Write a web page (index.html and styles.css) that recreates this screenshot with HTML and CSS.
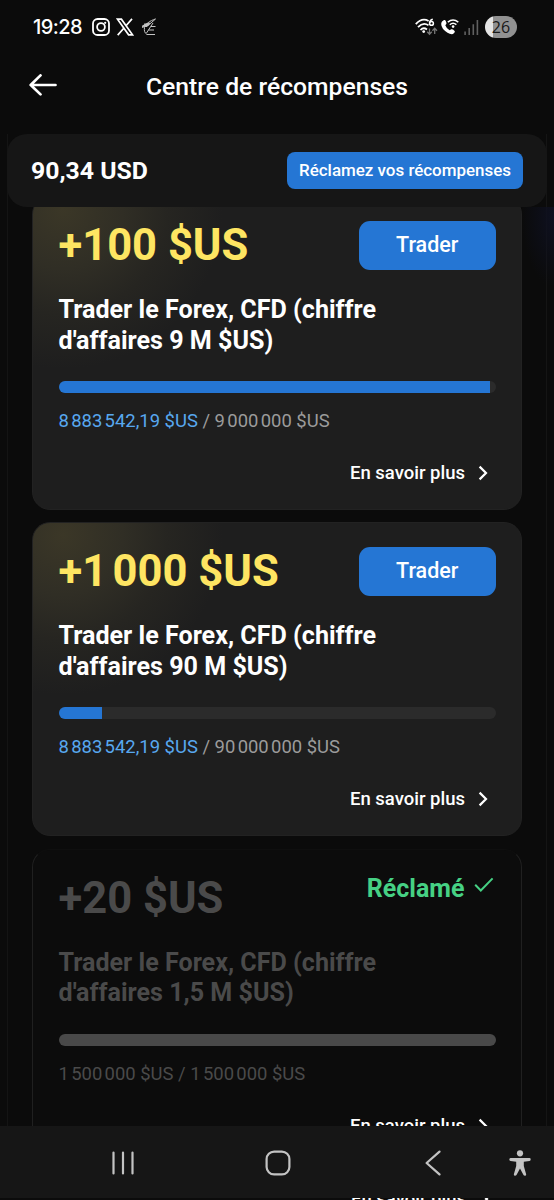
FILE: index.html
```
<!DOCTYPE html>
<html lang="fr">
<head>
<meta charset="utf-8">
<title>Centre de récompenses</title>
<link rel="stylesheet" href="styles.css">
</head>
<body>
<div class="phone">
  <div class="statusbar">
    <span class="clock">19:28</span>
    <svg class="ic-insta" viewBox="0 0 18 18" width="18" height="18" fill="none" stroke="#fff" stroke-width="1.800"><rect x="1" y="1" width="16" height="16" rx="4.600"/><circle cx="9" cy="9" r="3.900"/><circle cx="13.200" cy="4.800" r="1.100" fill="#fff" stroke="none"/></svg>
    <svg class="ic-x" viewBox="0 0 18 18" width="18" height="18" fill="none" stroke="#fff" stroke-width="1.700"><path d="M1.500 1.200H5.400L16.500 16.800H12.600Z"/><path d="M16 .9L10 7.800M7.800 10.200L1.700 17.100"/></svg>
    <svg class="ic-feather" viewBox="0 0 16 18" width="16" height="18" fill="none" stroke="#c4c4c4" stroke-width="1"><path d="M14.500 1C9 2.500 4 6.500 3.500 9.500S3.500 15 6 16.500H14M14.500 1L7 7.500 1 9.500M3 6L8 6.800M1 8.500L6 7.500M12 5L5.500 15M7.500 12H13M10 8.500H14.500"/><path d="M1.500 8L5.500 5.500 9 5.200 6 8.500Z" fill="#c4c4c4"/></svg>
    <span class="grow"></span>
    <svg class="ic-wifi" viewBox="0 0 23 18" width="23" height="18" fill="none" stroke="#fff" stroke-width="1.800"><path d="M.8 6.200Q7-.8 13.600 3M3 9.200Q8 3.800 13.500 7.300M5.500 12Q8.500 8.800 12 11.500"/><circle cx="8.700" cy="13.600" r="1.400" fill="#fff" stroke="none"/><path d="M17.800 1.200Q14.800 1.800 14.500 5.200" stroke-width="1.500"/><circle cx="16.500" cy="5.400" r="1.900" stroke-width="1.500"/><path d="M14.500 10.500V16M12.200 13.800L14.500 16.200 16.800 13.800M19.700 16V10.500M17.400 12.700L19.700 10.300 22 12.700" stroke="#777" stroke-width="1.300"/></svg>
    <svg class="ic-call" viewBox="0 0 18 16" width="18" height="16" fill="none" stroke="#fff"><path d="M1 2.600L3 1Q4 .6 4.500 1.500L5.500 4Q5.700 5 4.300 6.200Q5.300 9.200 8.600 11.200L10.200 10.300Q11 9.900 12 10.600L13.600 12Q14.200 12.700 13.500 13.400L12 15Q9.500 15.600 6.500 13.700Q.2 9.700.2 5Q.2 3.700 1 2.600Z" fill="#fff" stroke="none"/><path d="M6.800 3.200Q12-1 17.300 3.200M8.800 5.700Q12 3 15.400 5.700" stroke-width="1.500"/><circle cx="12.100" cy="7.600" r="1.300" fill="#fff" stroke="none"/></svg>
    <svg class="ic-signal" viewBox="0 0 15 15" width="15" height="15" stroke="#606060" stroke-width="1.600"><path d="M1.100 15V11.500M5.200 15V8M9.300 15V4.200M13.400 15V0"/></svg>
    <span class="battery">26</span>
  </div>

  <header class="header">
    <svg class="back" viewBox="0 0 28 22" width="28" height="22" fill="none" stroke="#fff" stroke-width="2.700" stroke-linecap="round" stroke-linejoin="round"><path d="M26.500 11H1.700M11.500 1.400L1.700 11 11.500 20.400"/></svg>
    <h1 class="heading"><span>Centre de récompenses</span></h1>
  </header>

  <main class="sheet">
    <section class="balance">
      <span class="balance-sum">90,34 USD</span>
      <button class="claim">Réclamez vos récompenses</button>
    </section>

    <div class="rewards">
      <article class="card">
        <div class="card-top"><span class="amount">+100 $US</span><button class="trade">Trader</button></div>
        <h2 class="title">Trader le Forex, CFD (chiffre<br>d'affaires 9 M $US)</h2>
        <div class="track"><div class="fill" style="width:98.700%"></div></div>
        <p class="progress"><b>8&#8201;883&#8201;542,19 $US</b> / 9&#8201;000&#8201;000 $US</p>
        <a class="more"><span>En savoir plus</span><svg viewBox="0 0 10 16" width="10" height="16"><path d="M1.600 1.600L8 8 1.600 14.400"/></svg></a>
      </article>

      <article class="card">
        <div class="card-top"><span class="amount">+1&#8201;000 $US</span><button class="trade">Trader</button></div>
        <h2 class="title">Trader le Forex, CFD (chiffre<br>d'affaires 90 M $US)</h2>
        <div class="track"><div class="fill" style="width:9.870%"></div></div>
        <p class="progress"><b>8&#8201;883&#8201;542,19 $US</b> / 90&#8201;000&#8201;000 $US</p>
        <a class="more"><span>En savoir plus</span><svg viewBox="0 0 10 16" width="10" height="16"><path d="M1.600 1.600L8 8 1.600 14.400"/></svg></a>
      </article>

      <article class="card claimed">
        <div class="card-top"><span class="amount">+20 $US</span><span class="status"><span>Réclamé</span><svg viewBox="0 0 20 16" width="20" height="16"><path d="M1.200 7.800L6.800 13.500 18.600 1.400"/></svg></span></div>
        <h2 class="title">Trader le Forex, CFD (chiffre<br>d'affaires 1,5 M $US)</h2>
        <div class="track"><div class="fill" style="width:100%"></div></div>
        <p class="progress">1&#8201;500&#8201;000 $US / 1&#8201;500&#8201;000 $US</p>
        <a class="more"><span>En savoir plus</span><svg viewBox="0 0 10 16" width="10" height="16"><path d="M1.600 1.600L8 8 1.600 14.400"/></svg></a>
      </article>
    </div>
  </main>

  <nav class="navbar">
    <svg class="nav-recent" viewBox="0 0 24 24" width="24" height="24" stroke="#c3c3c3" stroke-width="2.200" stroke-linecap="round"><path d="M2.500 1.500V22.500M12 1.500V22.500M21.500 1.500V22.500"/></svg>
    <svg class="nav-home" viewBox="0 0 26 26" width="26" height="26" fill="none" stroke="#c3c3c3" stroke-width="2.200"><rect x="1.600" y="1.600" width="22.800" height="22.800" rx="7.500"/></svg>
    <svg class="nav-back" viewBox="0 0 16 26" width="16" height="26" fill="none" stroke="#c3c3c3" stroke-width="2.200" stroke-linecap="round" stroke-linejoin="round"><path d="M14.500 1.600L1.600 13 14.500 24.400"/></svg>
    <svg class="nav-access" viewBox="0 0 22 26" width="22" height="26" fill="#c3c3c3"><circle cx="11" cy="3.300" r="3.100"/><path d="M1.500 8H20.500Q21.700 8 21.700 9.400T20.500 10.900L14.800 11.800V16L17.200 24.500Q17.200 25.700 16 25.700T14.500 25L11 18.500 7.500 25Q7 25.700 6 25.700T4.800 24.500L7.200 16V11.800L1.500 10.900Q.3 10.700.3 9.400T1.500 8Z"/></svg>
  </nav>

  <div class="sliver" aria-hidden="true">
    <a class="more"><span>En savoir plus</span><svg viewBox="0 0 10 16" width="10" height="16"><path d="M1.600 1.600L8 8 1.600 14.400"/></svg></a>
  </div>
</div>
</body>
</html>
```
FILE: styles.css
```
* { box-sizing: border-box; }
body { margin: 0; background: #0b0b0b; font-family: Roboto, "Liberation Sans", sans-serif; color: #fff; }
button { border: 0; padding: 0; font-family: inherit; color: #fff; }
svg { display: block; flex: none; }
.phone { width: 554px; height: 1200px; overflow: hidden; display: flex; flex-direction: column; }

.statusbar { height: 53px; flex: none; display: flex; align-items: center; padding: 0 37px 0 33px; }
.clock { width: 59px; font: 500 20px/24px Inter, sans-serif; letter-spacing: -.6px; white-space: nowrap; }
.ic-x { margin-left: 6px; }
.ic-feather { margin-left: 7px; }
.grow { flex: 1; }
.ic-wifi { margin-right: 1px; }
.ic-call { margin-left: 2px; }
.ic-signal { margin: 1px 6px 0 5px; }
.battery { width: 32px; height: 22px; border-radius: 11px; background: linear-gradient(90deg, #e4e4e4 8px, #919191 8px); color: #181818; font: 500 16px/22px "Open Sans", sans-serif; text-align: center; }

.header { height: 81px; flex: none; display: grid; grid-template-columns: 28px 1fr 28px; padding: 21px 29px 0; }
.heading { margin: 0; font-size: 24.700px; font-weight: 500; line-height: 25px; text-align: center; white-space: nowrap; }

.sheet { height: 992px; flex: none; display: flex; flex-direction: column; background: linear-gradient(90deg, transparent 7px, #141414 7px, #141414 8px, transparent 8px, transparent 546px, #151515 546px, #151515 547px, transparent 547px); }
.balance { height: 73px; flex: none; margin: 0 7px; padding: 0 24px; border-radius: 20px; background: #161616; display: flex; align-items: center; justify-content: space-between; }
.balance-sum { font-size: 24.800px; line-height: 29px; font-weight: 700; white-space: nowrap; }
.claim { width: 236px; height: 37px; border-radius: 8px; background: #2576d4; font-size: 16.950px; font-weight: 500; padding-bottom: 2px; white-space: nowrap; }

.rewards { flex: 1; min-height: 0; overflow: hidden; padding: 0 32px; display: flex; flex-direction: column; gap: 12.300px; background: radial-gradient(ellipse 32px 70px at 554px 10px, #0e1020, transparent); }
.card { height: 314px; flex: none; border: 1px solid #222; border-radius: 18px; background: radial-gradient(circle at 30px 12px, #3b3727 0, #302e25 60px, #262521 105px, #1e1e1e 160px); padding: 24px 25.500px; display: flex; flex-direction: column; }
.card:first-child { margin-top: -11px; }
.card-top { display: flex; justify-content: space-between; height: 49px; flex: none; }
.amount { font-size: 43.500px; line-height: 49px; font-weight: 700; color: #fee562; white-space: nowrap; }
.trade { width: 136.500px; height: 49px; border-radius: 11px; background: #2576d4; font-size: 21.500px; font-weight: 500; padding-bottom: 2px; }
.title { margin: 25px 0 0; font-size: 25.100px; font-weight: 700; line-height: 30.700px; white-space: nowrap; }
.track { flex: none; height: 12px; margin-top: 24.500px; border-radius: 6px; background: #2b2b2b; overflow: hidden; }
.fill { height: 100%; background: #2576d4; }
.progress { margin: 17px 0 0; font-size: 18.450px; line-height: 22px; color: #9b9b9b; white-space: nowrap; }
.progress b { font-weight: 400; color: #58a8ef; }
.more { display: flex; align-items: center; align-self: flex-end; gap: 13px; margin: 29px 7.500px 0 0; font-size: 18.500px; font-weight: 500; line-height: 24px; white-space: nowrap; color: #fff; }
.more svg { fill: none; stroke: #fff; stroke-width: 2.200; }

.claimed { background: #0c0c0c; border-color: #202020; border-top-color: #0f0f0f; }
.claimed .amount, .claimed .title, .claimed .progress { color: #4a4a4a; }
.claimed .fill { background: #494949; }
.status { display: flex; gap: 9px; color: #46d184; font-size: 25px; font-weight: 700; line-height: 29px; padding: 0 2px 0 0; }
.status svg { margin-top: 3px; fill: none; stroke: #46d184; stroke-width: 2; }

.navbar { height: 72px; flex: none; background: #161616; display: flex; align-items: center; padding: 2px 23px 0 111px; }
.nav-home { margin-left: 130px; }
.nav-back { margin-left: 134px; }
.nav-access { margin-left: 68px; }
.sliver { height: 2px; flex: none; overflow: hidden; display: flex; justify-content: flex-end; align-items: center; padding-right: 65px; }
.sliver .more { margin: 0; align-self: center; }
```
